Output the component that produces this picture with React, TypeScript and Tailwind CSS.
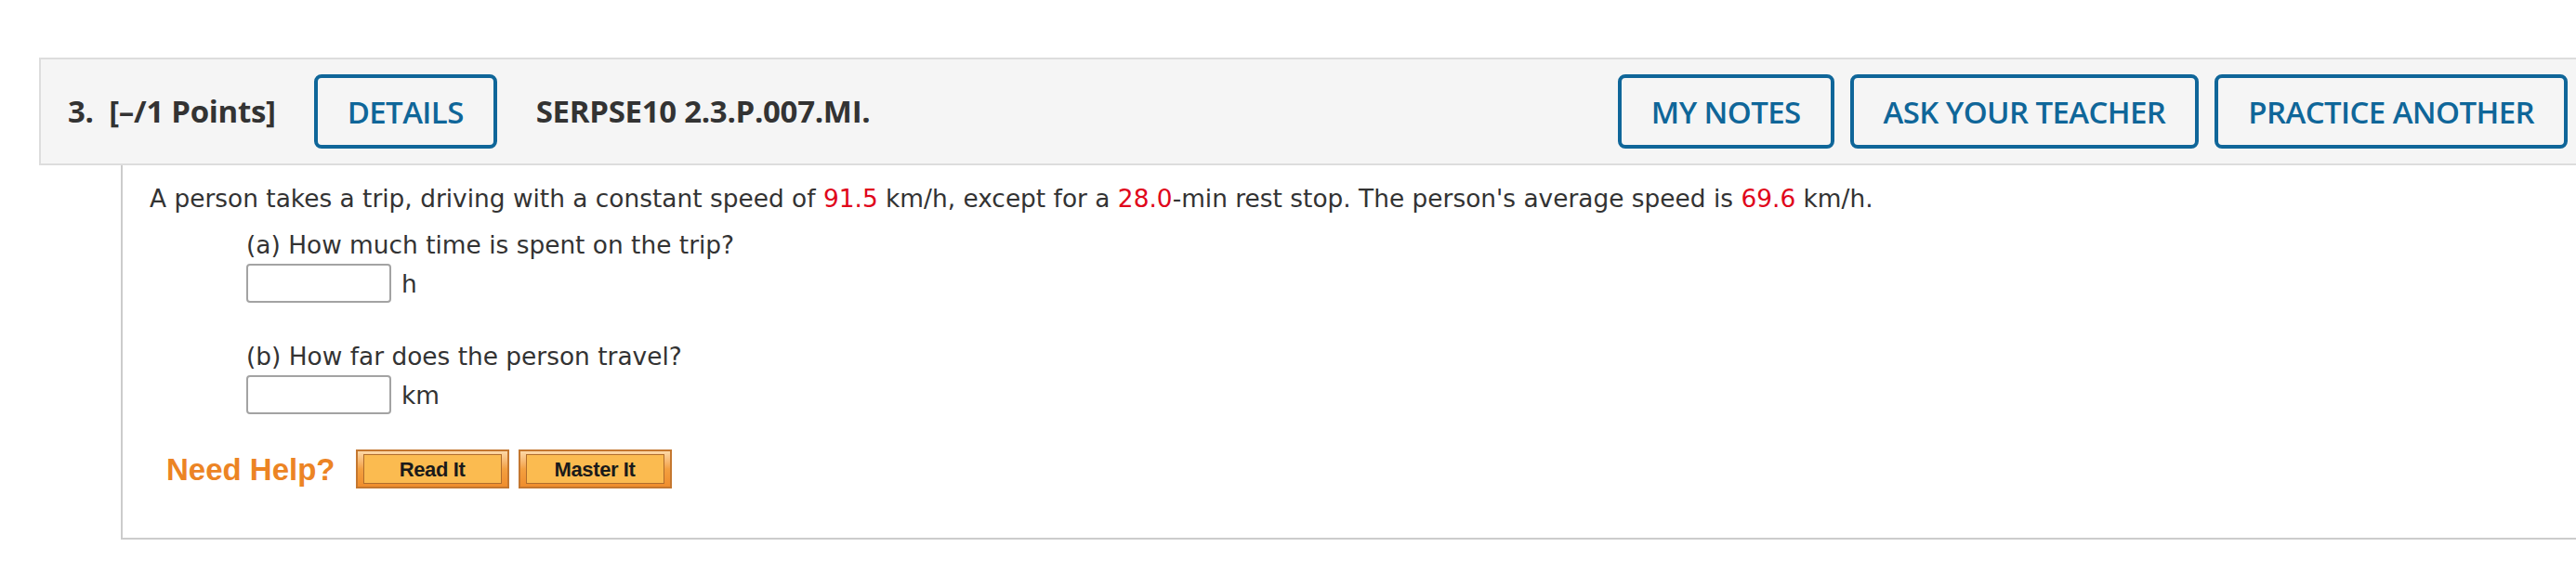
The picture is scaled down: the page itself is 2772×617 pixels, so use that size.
const RED = 'text-[#e0061b]';

function HeaderButton({ label }: { label: string }) {
  return (
    <button className="h-[80px] px-[32px] rounded-[8px] border-4 border-[#0f6699] bg-transparent text-[#0f6699] text-[33px] font-semibold tracking-[-0.6px] leading-none">
      {label}
    </button>
  );
}

function HelpButton({ label }: { label: string }) {
  return (
    <div className="w-[165px] h-[42px] border-2 border-[#c4772f] bg-gradient-to-b from-[#fcd8a6] via-[#f3a040] to-[#ef8d2c] px-[6px] py-[3px]">
      <div className="h-full border border-[#b06d2c] bg-[#fbbb50] flex items-center justify-center text-[22px] font-bold text-[#1a1a1a] font-['Liberation_Sans',Arial,sans-serif] tracking-[-0.4px]">
        {label}
      </div>
    </div>
  );
}

function Answer({ unit }: { unit: string }) {
  return (
    <div className="flex items-center gap-[11px] mt-[4px]">
      <div className="w-[156px] h-[42px] border-2 border-[#a3a3a3] rounded-[4px] bg-white" />
      <span>{unit}</span>
    </div>
  );
}

export default function App() {
  return (
    <div className="w-[2772px] h-[617px] bg-white overflow-hidden">
      <div className="mt-[62px] ml-[42px] border-2 border-r-0 border-[#dddddd] bg-[#f5f5f5] flex items-center py-[16px] pl-[29px] pr-[9px] font-['Open_Sans',sans-serif] text-[33px]">
        <span className="font-bold text-[#333333] tracking-[-0.3px] whitespace-pre">3.  [–/1 Points]</span>
        <div className="ml-[41px]">
          <HeaderButton label="DETAILS" />
        </div>
        <span className="ml-[42px] font-bold text-[#333333] tracking-[-0.3px]">SERPSE10 2.3.P.007.MI.</span>
        <div className="ml-auto flex gap-[17px]">
          <HeaderButton label="MY NOTES" />
          <HeaderButton label="ASK YOUR TEACHER" />
          <HeaderButton label="PRACTICE ANOTHER" />
        </div>
      </div>

      <div className="ml-[130px] border-l-2 border-b-2 border-[#cccccc] pt-[19px] pl-[29px] pb-[53px] font-['DejaVu_Sans',Verdana,sans-serif] text-[26.4px] leading-[33px] text-[#333333]">
        <p>
          A person takes a trip, driving with a constant speed of <span className={RED}>91.5</span> km/h, except for a{' '}
          <span className={RED}>28.0</span>-min rest stop. The person's average speed is <span className={RED}>69.6</span> km/h.
        </p>

        <div className="ml-[104px] mt-[17px]">
          <p>(a) How much time is spent on the trip?</p>
          <Answer unit="h" />
        </div>

        <div className="ml-[104px] mt-[41px]">
          <p>(b) How far does the person travel?</p>
          <Answer unit="km" />
        </div>

        <div className="flex items-center mt-[38px] ml-[18px]">
          <span className="font-['Liberation_Sans',Arial,sans-serif] font-bold text-[33px] leading-none text-[#ec8424]">
            Need Help?
          </span>
          <div className="flex gap-[10px] ml-[22px]">
            <HelpButton label="Read It" />
            <HelpButton label="Master It" />
          </div>
        </div>
      </div>
    </div>
  );
}
